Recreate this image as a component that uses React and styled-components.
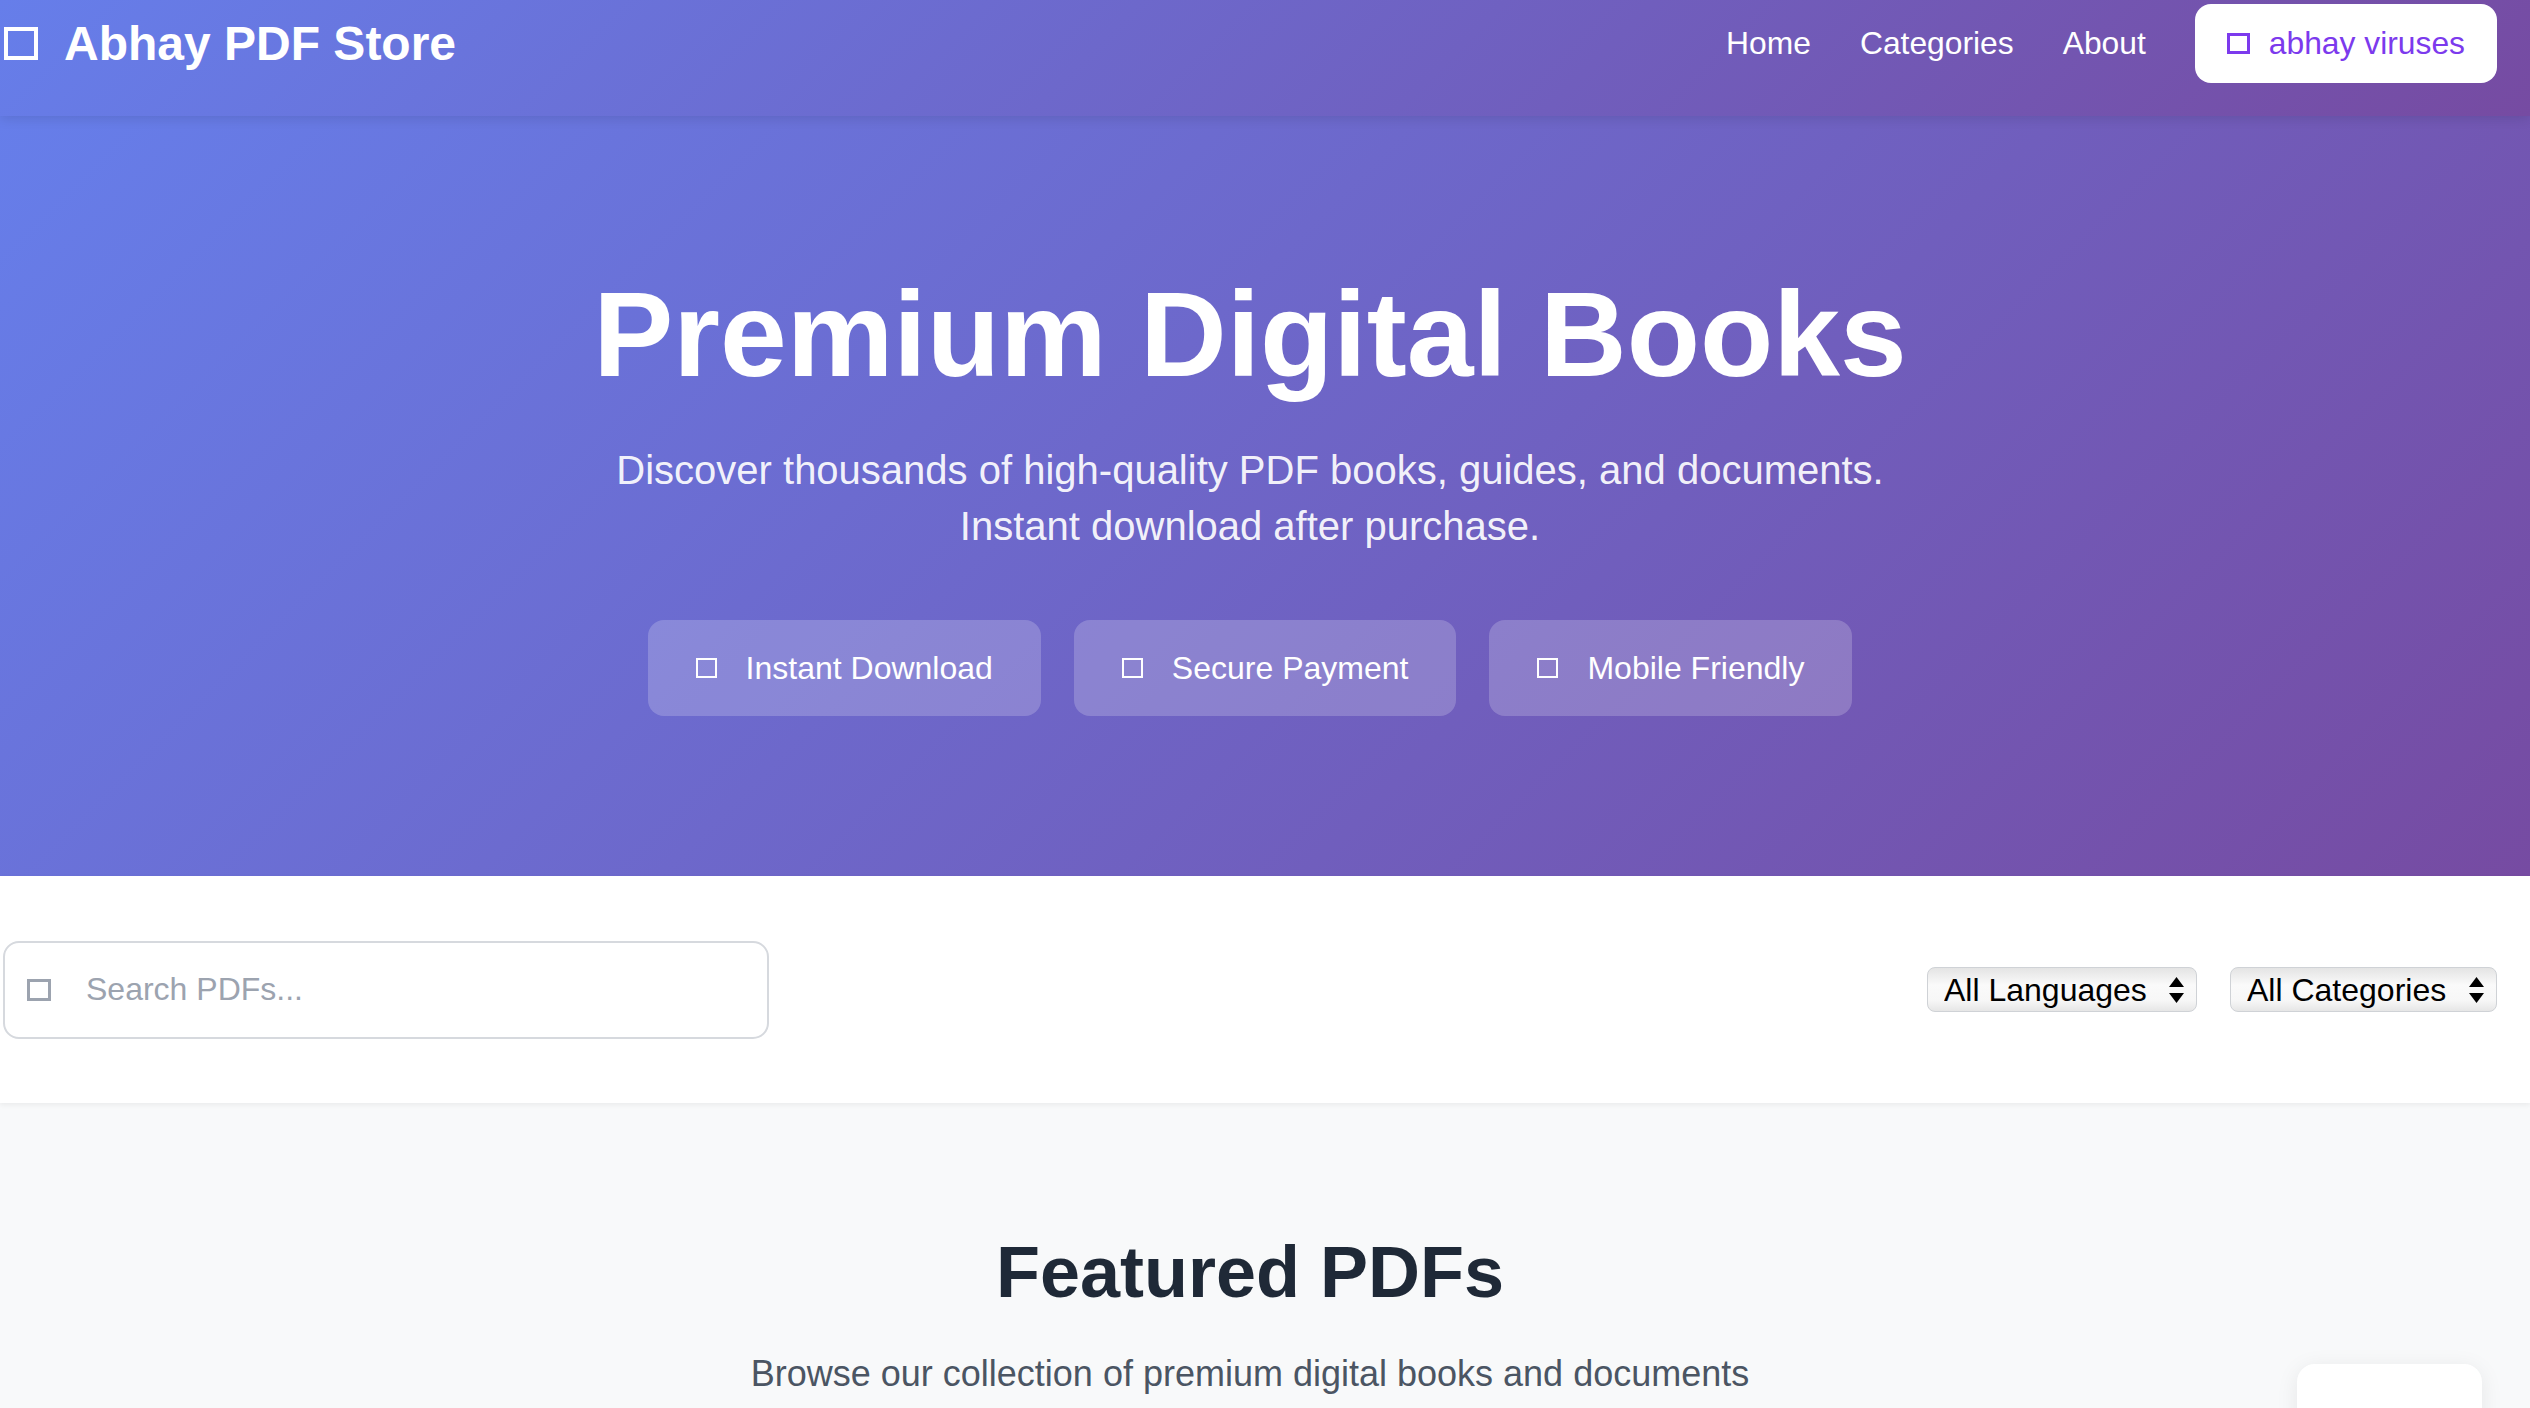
import React from 'react';
import styled, { createGlobalStyle } from 'styled-components';

const GlobalStyle = createGlobalStyle`
  * { box-sizing: border-box; }
  html, body { margin: 0; padding: 0; }
  body {
    font-family: "Liberation Sans", Arial, Helvetica, sans-serif;
    background: #f8f9fa;
    color: #1f2937;
    overflow: hidden;
  }
`;

const gradient = 'linear-gradient(135deg, #667eea 0%, #764ba2 100%)';

const Container = styled.div`
  width: 2500px;
  padding: 0 3px;
`;

const Header = styled.header`
  position: relative;
  z-index: 2;
  height: 116px;
  background: ${gradient};
  box-shadow: 0 2px 12px rgba(0, 0, 0, 0.12);
`;

const HeaderRow = styled(Container)`
  display: flex;
  align-items: center;
  justify-content: space-between;
  padding-top: 4px;
  height: 83px;
`;

const Tofu = styled.span`
  display: inline-block;
  flex: none;
  width: ${(p) => p.$w}px;
  height: ${(p) => p.$h}px;
  border: ${(p) => p.$b}px solid currentColor;
`;

const Logo = styled.a`
  display: flex;
  align-items: center;
  gap: 26px;
  padding-left: 1px;
  color: #fff;
  font-size: 48px;
  font-weight: 700;
  text-decoration: none;
`;

const Nav = styled.nav`
  display: flex;
  align-items: center;
  gap: 49px;
`;

const NavLink = styled.a`
  color: #fff;
  font-size: 31.8px;
  text-decoration: none;
`;

const UserButton = styled.button`
  display: flex;
  align-items: center;
  gap: 19px;
  height: 79px;
  padding: 0 32px;
  border: none;
  border-radius: 16px;
  background: #fff;
  color: #7c3aed;
  font-family: inherit;
  font-size: 31.8px;
`;

const Hero = styled.section`
  height: 760px;
  background: ${gradient};
  color: #fff;
`;

const HeroInner = styled(Container)`
  display: flex;
  flex-direction: column;
  align-items: center;
  text-align: center;
  padding-top: 146px;
`;

const Title = styled.h1`
  margin: 0;
  font-size: 120px;
  line-height: 144px;
  font-weight: 700;
`;

const Lead = styled.p`
  margin: 36px 0 0;
  font-size: 40px;
  line-height: 56px;
  color: rgba(255, 255, 255, 0.93);
`;

const Features = styled.div`
  display: flex;
  gap: 33px;
  margin-top: 66px;
`;

const Feature = styled.div`
  display: flex;
  align-items: center;
  gap: 29px;
  height: 96px;
  padding: 0 48px;
  border-radius: 16px;
  background: rgba(255, 255, 255, 0.2);
  font-size: 32px;
  color: #fff;
`;

const FilterBar = styled.section`
  position: relative;
  z-index: 1;
  height: 227px;
  background: #fff;
  box-shadow: 0 2px 5px rgba(0, 0, 0, 0.06);
`;

const FilterRow = styled(Container)`
  display: flex;
  align-items: center;
  justify-content: space-between;
  height: 100%;
`;

const SearchWrap = styled.div`
  position: relative;
  width: 766px;
`;

const SearchInput = styled.input`
  width: 100%;
  height: 98px;
  padding: 0 24px 0 81px;
  border: 2px solid #d6d9de;
  border-radius: 16px;
  background: #fff;
  font-family: inherit;
  font-size: 32px;
  color: #1f2937;
  outline: none;
  &::placeholder { color: #9ca3af; }
`;

const SearchIcon = styled(Tofu)`
  position: absolute;
  left: 24px;
  top: 50%;
  transform: translateY(-50%);
  color: #9ca3af;
`;

const SelectGroup = styled.div`
  display: flex;
  gap: 33px;
`;

const SelectWrap = styled.div`
  position: relative;
  width: ${(p) => p.$w}px;
`;

const Select = styled.select`
  appearance: none;
  -webkit-appearance: none;
  width: 100%;
  height: 45px;
  padding: 0 40px 0 16px;
  border: 1.5px solid #cfd2d6;
  border-radius: 8px;
  background: linear-gradient(#e4e4e4 0%, #fafafa 40%, #f7f7f7 75%, #e6e6e6 100%);
  font-family: inherit;
  font-size: 32px;
  color: #000;
  outline: none;
`;

const Arrows = styled.svg`
  position: absolute;
  right: 13px;
  top: 50%;
  transform: translateY(-50%);
  pointer-events: none;
`;

const Featured = styled.section`
  min-height: 900px;
  padding-top: 126px;
  background: #f8f9fa;
`;

const SectionTitle = styled.h2`
  margin: 0;
  font-size: 72px;
  line-height: 86px;
  font-weight: 700;
  color: #1f2937;
  text-align: center;
`;

const SectionSub = styled.p`
  margin: 32px 0 0;
  font-size: 36px;
  line-height: 54px;
  color: #4b5563;
  text-align: center;
`;

const FloatingCard = styled.div`
  position: fixed;
  right: 48px;
  top: 1364px;
  width: 185px;
  height: 120px;
  border-radius: 18px;
  background: #fff;
  box-shadow: 0 4px 22px rgba(0, 0, 0, 0.08);
`;

const UpDown = () => (
  <Arrows width="15" height="26" viewBox="0 0 15 26">
    <path d="M7.5 0 L15 10 L0 10 Z" fill="#000" />
    <path d="M0 16 L15 16 L7.5 26 Z" fill="#000" />
  </Arrows>
);

const features = ['Instant Download', 'Secure Payment', 'Mobile Friendly'];

export default function App() {
  return (
    <>
      <GlobalStyle />
      <Header>
        <HeaderRow>
          <Logo href="#">
            <Tofu $w={34} $h={33} $b={4} />
            Abhay PDF Store
          </Logo>
          <Nav>
            <NavLink href="#">Home</NavLink>
            <NavLink href="#">Categories</NavLink>
            <NavLink href="#">About</NavLink>
            <UserButton>
              <Tofu $w={23} $h={21} $b={3} />
              abhay viruses
            </UserButton>
          </Nav>
        </HeaderRow>
      </Header>

      <Hero>
        <HeroInner>
          <Title>Premium Digital Books</Title>
          <Lead>
            Discover thousands of high-quality PDF books, guides, and documents.
            <br />
            Instant download after purchase.
          </Lead>
          <Features>
            {features.map((f) => (
              <Feature key={f}>
                <Tofu $w={21} $h={20} $b={2.5} />
                {f}
              </Feature>
            ))}
          </Features>
        </HeroInner>
      </Hero>

      <FilterBar>
        <FilterRow>
          <SearchWrap>
            <SearchIcon $w={24} $h={22} $b={3} />
            <SearchInput placeholder="Search PDFs..." />
          </SearchWrap>
          <SelectGroup>
            <SelectWrap $w={270}>
              <Select defaultValue="all">
                <option value="all">All Languages</option>
              </Select>
              <UpDown />
            </SelectWrap>
            <SelectWrap $w={267}>
              <Select defaultValue="all">
                <option value="all">All Categories</option>
              </Select>
              <UpDown />
            </SelectWrap>
          </SelectGroup>
        </FilterRow>
      </FilterBar>

      <Featured>
        <Container>
          <SectionTitle>Featured PDFs</SectionTitle>
          <SectionSub>Browse our collection of premium digital books and documents</SectionSub>
        </Container>
      </Featured>
      <FloatingCard />
    </>
  );
}
